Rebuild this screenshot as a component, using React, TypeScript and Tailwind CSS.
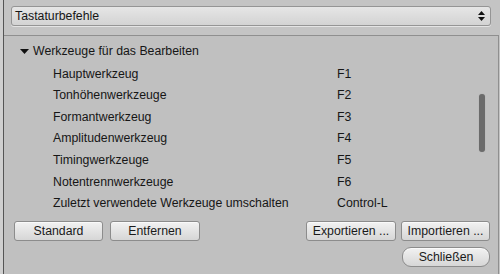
const rows: [string, string][] = [
  ["Hauptwerkzeug", "F1"],
  ["Tonhöhenwerkzeuge", "F2"],
  ["Formantwerkzeug", "F3"],
  ["Amplitudenwerkzeug", "F4"],
  ["Timingwerkzeuge", "F5"],
  ["Notentrennwerkzeuge", "F6"],
  ["Zuletzt verwendete Werkzeuge umschalten", "Control-L"],
];

function Btn({ label, className = "" }: { label: string; className?: string }) {
  return (
    <button
      className={
        "flex h-[20px] items-center justify-center border border-[#8c8c8c] bg-gradient-to-b from-[#f2f2f2] to-[#d6d6d6] text-[12.3px] text-[#1a1a1a] shadow-[inset_0_1px_0_#fafafa] " +
        className
      }
    >
      {label}
    </button>
  );
}

export default function App() {
  return (
    <div className="flex h-[274px] w-[500px] bg-[#c4c4c4] font-['Liberation_Sans',Arial,sans-serif] text-[#161616]">
      <div className="w-[3px] shrink-0 bg-[#cfcfcf]" />
      <div className="flex flex-1 flex-col border-l border-[#555]">
        {/* preset selector */}
        <div className="h-[35px] shrink-0 pl-[7px] pr-[9px] pt-[6px]">
          <div className="flex h-[20px] items-center justify-between rounded-[3px] border border-[#959595] bg-gradient-to-b from-[#e6e6e6] to-[#d3d3d3] pl-[3px] pr-[5px] text-[12.3px] shadow-[0_1px_0_#e4e4e4]">
            <span>Tastaturbefehle</span>
            <svg width="7" height="10" viewBox="0 0 7 10" className="fill-[#111]">
              <path d="M3.5 0 L7 4 L0 4 Z" />
              <path d="M0 6 L7 6 L3.5 10 Z" />
            </svg>
          </div>
        </div>

        <div className="mr-[1px] flex flex-1 flex-col border-r border-t border-[#8f8f8f] bg-[#c0c0c0]">
          <div className="flex h-[178px] shrink-0">
            <div className="flex-1 pt-[4px]">
              <div className="flex h-[23px] items-center pl-[16px] text-[12.3px]">
                <svg width="9" height="5" viewBox="0 0 9 5" className="mr-[4px] fill-[#111]">
                  <path d="M0 0 L9 0 L4.5 5 Z" />
                </svg>
                Werkzeuge für das Bearbeiten
              </div>
              {rows.map(([name, key]) => (
                <div key={name} className="flex h-[21.6px] items-center text-[12.3px]">
                  <span className="w-[333px] shrink-0 pl-[49px]">{name}</span>
                  <span>{key}</span>
                </div>
              ))}
            </div>
            <div className="w-[19px] shrink-0 pt-[58px]">
              <div className="h-[58px] w-[6px] rounded-full bg-[#6b6b6b] shadow-[0_0_1px_#999]" />
            </div>
          </div>

          <div className="flex justify-between pl-[10px] pr-[8px] pt-[7px]">
            <div className="flex gap-[7px]">
              <Btn label="Standard" className="w-[89px] rounded-[3px]" />
              <Btn label="Entfernen" className="w-[90px] rounded-[3px]" />
            </div>
            <div className="flex flex-col items-end gap-[6px]">
              <div className="flex gap-[5px]">
                <Btn label="Exportieren ..." className="w-[90px] rounded-[3px]" />
                <Btn label="Importieren ..." className="w-[89px] rounded-[3px]" />
              </div>
              <Btn label="Schließen" className="w-[88px] rounded-[9px]" />
            </div>
          </div>
        </div>
      </div>
    </div>
  );
}
